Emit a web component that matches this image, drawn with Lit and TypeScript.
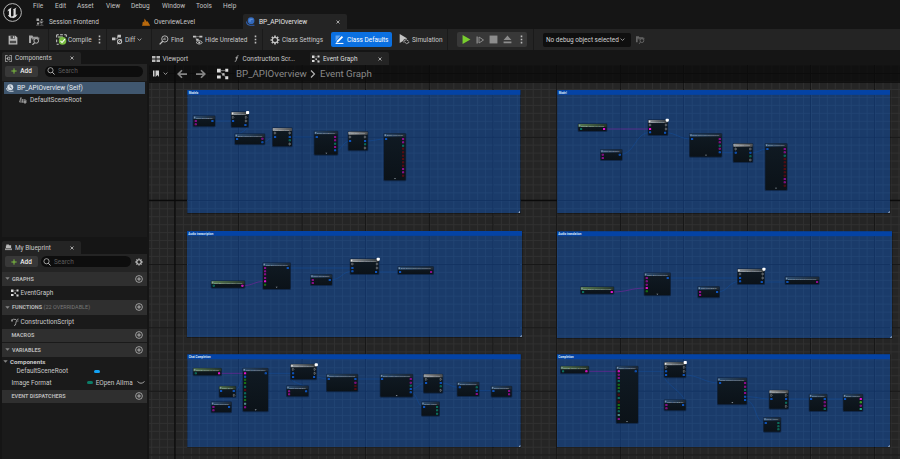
import { LitElement, html, svg, css } from "lit";
import { customElement } from "lit/decorators.js";

type Pin = [number, number, string];
type Node = { b: [number, number, number, number]; k: string; t: string; p: Pin[]; badge?: [number, number]; more?: [number, number] };
type Group = { o: [number, number]; b: [number, number, number, number]; t: string; tw: number; nodes: Node[]; wires: [string, string][] };

const col = (x: number, ys: number[], kinds: string): Pin[] => ys.map((y, i) => [x, y, kinds[i]] as Pin);
const n = (x: number, y: number, w: number, h: number, k: string, t: string, p: Pin[], badge?: [number, number], more?: [number, number]): Node => ({ b: [x, y, w, h], k, t, p, badge, more });

/* Coordinates inside a group are in thirds of a pixel. */
const groups: Group[] = [
  {
    o: [150, 80], b: [112, 30, 999, 369], t: "Models", tw: 29,
    nodes: [
      n(129, 107, 67, 33, "blue", "Make OpenAIAuth", [...col(137, [123, 133], "mm"), [187, 123, "b"]]),
      n(243, 95, 53, 47, "async", "Get Models", [...col(249, [112, 123], "wb"), ...col(288, [112, 123], "ww"), [286, 135, "b"]], [293, 97]),
      n(254, 161, 91, 33, "blue", "Break ListModelsResponse", [[261, 177, "b"], ...col(337, [176, 187], "mb")]),
      n(367, 143, 60, 57, "gray", "For Each Loop", [...col(375, [159, 171], "wb"), ...col(419, [159, 171, 181, 192], "wbgw")]),
      n(492, 153, 72, 72, "blue", "Break OpenAIModel", [[500, 171, "b"], ...col(555, [171, 181, 191, 201, 211], "mmgmb")], undefined, [529, 220]),
      n(594, 154, 60, 58, "gray", "For Each Loop", [...col(600, [171, 183], "wb"), ...col(645, [171, 183, 193, 204], "wbgw")]),
      n(701, 160, 67, 142, "blue", "Break Permission", [[708, 177, "b"], ...col(759, [177, 187, 197, 206, 217, 227, 237, 247, 257, 267, 277, 287], "mmgrrrrrrmmr")], undefined, [735, 296]),
    ],
    wires: [["M187 123H249", "b"], ["M286 135C310 150 240 165 261 177", "b"], ["M337 187C355 187 355 171 375 171", "b"], ["M418 171H500", "b"], ["M555 211C578 211 578 183 600 183", "b"], ["M645 183C675 183 680 177 708 177", "b"]],
  },
  {
    o: [560, 80], b: [-8, 30, 998, 369], t: "Model", tw: 24,
    nodes: [
      n(54, 131, 87, 23, "green", "OpenAI Model To String", [[63, 147, "g"], [132, 147, "M"]]),
      n(121, 208, 66, 33, "blue", "Make OpenAIAuth", [...col(128, [224, 234], "mm"), [179, 224, "b"]]),
      n(264, 119, 60, 47, "async", "Retrieve Model", [...col(270, [135, 147, 157], "wMb"), ...col(318, [135, 147], "ww"), [315, 158, "b"]], [322, 120]),
      n(388, 160, 98, 71, "blue", "Break RetrieveModelResponse", [[396, 177, "b"], ...col(479, [177, 187, 197, 206, 217], "mmgmb")], undefined, [438, 226]),
      n(519, 190, 60, 57, "gray", "For Each Loop", [...col(527, [207, 218], "wb"), ...col(571, [207, 218, 229, 240], "wbgw")]),
      n(615, 190, 67, 141, "blue", "Break Permission", [[622, 207, "b"], ...col(674, [207, 217, 227, 237, 247, 257, 267, 277, 287, 297, 307, 317], "mmgrrrrrrmmr")], undefined, [648, 325]),
    ],
    wires: [["M132 147H270", "m"], ["M179 224C225 224 225 157 270 157", "b"], ["M315 158C350 158 355 177 396 177", "b"], ["M479 217H527", "b"], ["M571 218C600 218 600 207 622 207", "b"]],
  },
  {
    o: [150, 222], b: [111, 27, 1005, 318], t: "Audio transcription", tw: 75,
    nodes: [
      n(183, 176, 102, 22, "green", "Open AIAudio Transcription Format", [[191, 191, "g"], [277, 191, "M"]]),
      n(338, 122, 84, 80, "blue", "Make AudioTranscription", [...col(345, [138, 148, 157, 168, 178, 188], "mmmmMe"), [413, 138, "b"]], undefined, [380, 196]),
      n(481, 157, 66, 33, "blue", "Make OpenAIAuth", [...col(488, [174, 183], "mm"), [539, 174, "b"]]),
      n(600, 110, 87, 47, "async", "Create Audio Transcription", [...col(607, [126, 138, 148], "wbb"), ...col(681, [126, 138], "ww"), [678, 150, "b"]], [685, 111]),
      n(743, 133, 108, 24, "blue", "Break AudioTranscriptionResponse", [[750, 150, "b"], [843, 150, "m"]]),
    ],
    wires: [["M277 191C310 191 312 178 345 178", "m"], ["M413 138H607", "b"], ["M539 174C575 174 575 148 607 148", "b"], ["M678 150H750", "b"]],
  },
  {
    o: [550, 222], b: [21, 28, 1005, 320], t: "Audio translation", tw: 69,
    nodes: [
      n(91, 194, 101, 22, "green", "Open AIAudio Transcription Format", [[99, 210, "g"], [185, 210, "M"]]),
      n(282, 152, 80, 69, "blue", "Make AudioTranslation", [...col(290, [168, 178, 188, 198, 208], "mmmMe"), [353, 168, "b"]], undefined, [322, 217]),
      n(443, 193, 66, 34, "blue", "Make OpenAIAuth", [...col(450, [210, 219], "mm"), [501, 210, "b"]]),
      n(562, 140, 82, 47, "async", "Create Audio Translation", [...col(570, [156, 168, 178], "wbb"), ...col(638, [156, 168], "ww"), [635, 180, "b"]], [642, 141]),
      n(705, 164, 103, 23, "blue", "Break AudioTranslationResponse", [[712, 180, "b"], [801, 180, "m"]]),
    ],
    wires: [["M185 210C235 210 240 198 290 198", "m"], ["M353 168H570", "b"], ["M501 210C535 210 535 178 570 178", "b"], ["M635 180H712", "b"]],
  },
  {
    o: [150, 345], b: [112, 28, 1000, 278], t: "Chat Completion", tw: 66,
    nodes: [
      n(129, 69, 86, 23, "green", "OpenAI Model To String", [[137, 85, "g"], [207, 85, "M"]]),
      n(207, 123, 51, 34, "green", "Make Array", [[213, 138, "b"], [251, 138, "b"], [252, 151, "w"]]),
      n(183, 170, 62, 33, "blue", "Make Message", [...col(190, [186, 196], "mm"), [237, 186, "b"]]),
      n(278, 69, 77, 131, "blue", "Make ChatCompletion", [...col(285, [85, 95, 104, 114, 125, 135, 145, 155, 165, 176, 187], "Mbeegrggecm"), [347, 85, "b"]], undefined, [317, 195]),
      n(409, 122, 67, 33, "blue", "Make OpenAIAuth", [...col(417, [139, 148], "mm"), [468, 139, "b"]]),
      n(421, 57, 79, 47, "async", "Create Chat Completion", [...col(429, [73, 85, 96], "wbb"), ...col(494, [73, 85], "ww"), [492, 96, "b"]], [499, 59]),
      n(529, 87, 95, 53, "blue", "Break ChatCompletionRequest", [[536, 102, "b"], ...col(616, [102, 113, 123, 132], "bmrr")]),
      n(690, 87, 99, 69, "blue", "Break ChatCompletionResponse", [[696, 102, "b"], ...col(782, [102, 113, 122, 132, 142], "mmgbb")], undefined, [740, 152]),
      n(820, 87, 59, 57, "gray", "For Each Loop", [...col(828, [103, 114], "wb"), ...col(872, [103, 114, 124, 136], "wbgw")]),
      n(814, 170, 55, 43, "blue", "Break Usage", [[822, 186, "b"], ...col(861, [186, 196, 206], "ggg")]),
      n(921, 111, 67, 43, "blue", "Break ChatChoice", [[929, 127, "b"], ...col(980, [127, 137, 147], "gbm")]),
      n(1023, 123, 63, 33, "blue", "Break Message", [[1030, 138, "b"], ...col(1077, [138, 148], "mm")]),
    ],
    wires: [["M207 85H285", "m"], ["M251 138C275 138 265 95 285 95", "b"], ["M347 85H429", "b"], ["M468 139C500 125 400 110 429 96", "b"], ["M492 96C515 96 515 102 536 102", "b"], ["M616 102H696", "b"], ["M782 132C805 132 805 114 828 114", "b"], ["M782 142C805 145 800 186 822 186", "b"], ["M872 114C900 114 900 127 929 127", "b"], ["M980 137H1030", "b"]],
  },
  {
    o: [550, 345], b: [21, 28, 999, 278], t: "Completion", tw: 46,
    nodes: [
      n(31, 63, 86, 23, "green", "OpenAI Model To String", [[39, 79, "g"], [109, 79, "M"]]),
      n(198, 63, 67, 172, "blue", "Make Completion", [...col(206, [79, 89, 99, 108, 119, 129, 139, 149, 159, 170, 180, 189, 199, 210, 222], "Mmmgeegrgreegcm"), [257, 79, "b"]], undefined, [231, 230]),
      n(342, 51, 66, 47, "async", "Create Completion", [...col(348, [67, 79, 90], "wbb"), ...col(402, [67, 79], "ww"), [401, 90, "b"]], [406, 52]),
      n(342, 164, 66, 33, "blue", "Make OpenAIAuth", [...col(349, [180, 190], "mm"), [399, 180, "b"]]),
      n(502, 98, 89, 81, "blue", "Break CompletionResponse", [[510, 114, "b"], ...col(585, [114, 125, 135, 144, 155, 165], "mmgmbb")], undefined, [547, 173]),
      n(640, 217, 53, 44, "blue", "Break Usage", [[647, 234, "b"], ...col(685, [234, 244, 253], "ggg")]),
      n(657, 135, 59, 57, "gray", "For Each Loop", [...col(664, [151, 162], "wb"), ...col(708, [151, 162, 173, 184], "wbgw")]),
      n(777, 147, 55, 52, "blue", "Break Choice", [[783, 162, "b"], ...col(824, [162, 172, 182, 192], "bmmg")]),
      n(879, 147, 60, 52, "blue", "Break Logprobs", [[885, 162, "b"], ...col(932, [162, 172, 182, 192], "MEmC")]),
    ],
    wires: [["M109 79H206", "m"], ["M257 79H348", "b"], ["M399 180C425 150 325 110 348 90", "b"], ["M401 90C450 90 460 114 510 114", "b"], ["M585 155C620 155 630 162 664 162", "b"], ["M585 165C625 170 610 234 647 234", "b"], ["M708 162H783", "b"], ["M824 162H885", "b"]],
  },
];

const pinColor: Record<string, string> = { m: "#a30da0", M: "#f516dd", b: "#0f60dc", g: "#0c7f69", r: "#640b12", w: "#a4a9ad", e: "#1c8413", E: "#49cf28", c: "#5ba1a0", C: "#29c993" };

const icon = (w: number, body: unknown, cls = "") => html`<svg class="icon ${cls}" width=${w} height=${w} viewBox="0 0 16 16">${body}</svg>`;
const I = {
  save: svg`<path d="M1 1h11l3 3v11H1z" fill="#b9b9b9"/><path d="M4 1h7v5H4zM3 9h10v4H3z" fill="#4b4b4b"/><path d="M8 2h2v3H8z" fill="#c8c8c8"/>`,
  folder: svg`<path d="M0 2h5l1 2h7v2H3v7H0z" fill="#a5a5a5"/><path d="M4 5h11v3H4z" fill="#8a8a8a"/><circle cx="10.5" cy="10" r="3.4" fill="#242424" stroke="#bbb" stroke-width="1.4"/><path d="M8 13l-3 2.6" stroke="#bbb" stroke-width="1.7"/>`,
  compile: svg`<path d="M1 1h3M6 1h4M12 1h3M1 1v4M1 8v4M15 1v3M1 15h3" stroke="#c8c8c8" stroke-width="1.6"/><path d="M3 3h7v3H3z" fill="#7c8b72"/><circle cx="9.5" cy="10" r="5.5" fill="#79bd42"/><path d="M6.5 10l2.3 2.4L13 7.6" stroke="#fff" stroke-width="1.6" fill="none"/>`,
  diff: svg`<path d="M0 5h5v4H0zM8 1h5v4H8z" fill="#c4c4c4"/><path d="M5 7h3V3" stroke="#aaa" fill="none"/><circle cx="11" cy="11" r="3" fill="none" stroke="#bbb" stroke-width="1.6"/><path d="M8 15l6-8" stroke="#ddd"/>`,
  find: svg`<circle cx="9.3" cy="6.3" r="5" fill="none" stroke="#c4c4c4" stroke-width="1.4"/><path d="M1 15l5-5" stroke="#c4c4c4" stroke-width="2"/><path d="M6 7h2V5h3M8 7h3" stroke="#bbb" fill="none"/>`,
  hide: svg`<path d="M0 1h5v3H0zM10 1h5v3h-5zM5 6h4v3H5z" fill="#c4c4c4"/><path d="M4 2.5h7M5 4v3" stroke="#999"/><path d="M5 12q5-6 10 0q-5 5-10 0z" fill="none" stroke="#c4c4c4" stroke-width="1.4"/><circle cx="10" cy="12" r="1.6" fill="#ccc"/>`,
  gear: svg`<path d="M8 .8v14.4M.8 8h14.4M2.9 2.9l10.2 10.2M13.1 2.9L2.9 13.1" stroke="#c4c4c4" stroke-width="2.6"/><circle cx="8" cy="8" r="5" fill="#c4c4c4"/><circle cx="8" cy="8" r="3.3" fill="#242424"/>`,
  defaults: svg`<path d="M1 1h9L1 11z" fill="#cfe4ff" opacity=".45"/><path d="M2 14l1.5-4L12 1.6 14.5 4 6 12.3z" fill="#fff"/><path d="M1 15h14" stroke="#fff" stroke-width="1.8"/>`,
  sim: svg`<path d="M1 0l11 6.5L1 13z" fill="#c4c4c4"/><circle cx="10.5" cy="11.5" r="4.5" fill="#242424"/><path d="M6 11.5h2l3 2.5 4-2M7 9.5q4-3 7 1" stroke="#aaa" stroke-width="1.4" fill="none"/>`,
  play: svg`<path d="M1 0l14 8L1 16z" fill="#78cd2e"/>`,
  step: svg`<path d="M1 1h2.6v14H1z" fill="#8c8c8c"/><path d="M6 2l9 6-9 6z" fill="none" stroke="#8c8c8c" stroke-width="2"/>`,
  stop: svg`<path d="M1 1h14v14H1z" fill="#8c8c8c"/>`,
  eject: svg`<path d="M8 1l7 8H1zM1 11.5h14v3H1z" fill="#8c8c8c"/>`,
  dots: svg`<path d="M6.6 1h2.8v2.8H6.6zM6.6 6.6h2.8v2.8H6.6zM6.6 12.2h2.8V15H6.6z" fill="#bdbdbd"/>`,
  chev: svg`<path d="M2 5l6 6 6-6" stroke="#c4c4c4" stroke-width="2.4" fill="none"/>`,
  session: svg`<path d="M1 1h5v5H1zM2 9h4v4H2zM10 2h3v3h-3zM9 8h4v2H9z" fill="#a9a9a9"/><path d="M0 14.5h7M8 7h7M8 14.5h7M11.5 9v5M8 3v9" stroke="#999"/>`,
  level: svg`<path d="M1 9l3-2v4l1-10 5 7 1-2 4 7v2H1z" fill="#b8690d"/><path d="M0 14.5h16" stroke="#b8690d" stroke-width="1.6"/>`,
  bpBlue: svg`<circle cx="9" cy="6.5" r="6" fill="#3268bb"/><path d="M6 4h6M5 7h4" stroke="#6da0e8" stroke-width="1.6"/><path d="M1 8q0 6 6 6.500h8" stroke="#2f62b5" stroke-width="1.8" fill="none"/>`,
  bp: svg`<circle cx="8.5" cy="6.5" r="6" fill="#d6dde4"/><path d="M8 2.5v4l4 2" stroke="#52687d" stroke-width="1.6" fill="none"/><path d="M1 8q0 6 6 6.5h8" stroke="#d6dde4" stroke-width="1.8" fill="none"/>`,
  scene: svg`<path d="M4 11V3l-3 9h8M7 13V6M10 6v8h4V8h-4" stroke="#a9a9a9" stroke-width="1.5" fill="none"/><circle cx="12" cy="12" r="2.3" fill="#999"/>`,
  comp: svg`<path d="M6 1H1v14h5M10 1h5v14h-5" stroke="#c4c4c4" stroke-width="1.6" fill="none"/><path d="M6 5h5v6H6z" fill="none" stroke="#c4c4c4" stroke-width="1.6"/><path d="M3 8h4" stroke="#c4c4c4" stroke-width="1.6"/>`,
  mybp: svg`<path d="M3 1h6v2h5v6H2V4h1z" fill="#b8b8b8"/><path d="M0 10h16v4H0z" fill="#969696"/>`,
  viewport: svg`<path d="M0 2h7v5H0zM9 2h7v5H9zM0 9h7v5H0zM9 9h7v5H9z" fill="#b8b8b8"/>`,
  fn: svg`<path d="M4 14.5q2.500 1 3.300-2.500L9 4q.6-3 3.600-2.300M5.500 6.500h6" stroke="#c4c4c4" stroke-width="1.8" fill="none"/>`,
  graph: svg`<path d="M0 1h5v5H0zM0 10h5v4H0zM11 1h4v4h-4zM7 7h3v3H7zM11 11h4v4h-4z" fill="#dcdcdc"/><path d="M5 3.500h6M5 6l3 2.500 4 4" stroke="#999"/>`,
  script: svg`<path d="M6 15q4 0 3.500-4L11 5q1-3 4-3M1 5q3-4 9-2" stroke="#aaa" stroke-width="1.7" fill="none"/><path d="M0 3h4v4H0zM11 5h4v2h-4z" fill="#888"/>`,
  search: svg`<circle cx="7" cy="6.500" r="5.200" fill="none" stroke="#c4c4c4" stroke-width="1.500"/><path d="M10.600 10.400L15 15" stroke="#c4c4c4" stroke-width="2"/>`,
  plus: svg`<path d="M8 1v14M1 8h14" stroke="#7fc241" stroke-width="2.600"/>`,
  close: svg`<path d="M2 2l12 12M14 2L2 14" stroke="#cfcfcf" stroke-width="3"/>`,
  circ: svg`<circle cx="8" cy="8" r="6.800" fill="none" stroke="#c0c0c0" stroke-width="1.500"/><path d="M8 4.300v7.400M4.300 8h7.400" stroke="#c0c0c0" stroke-width="1.700"/>`,
  tri: svg`<path d="M1 4h14l-7 8z" fill="#858585"/>`,
  left: svg`<path d="M16 8H3M8 2L2 8l6 6" stroke="#858585" stroke-width="2.800" fill="none"/>`,
  right: svg`<path d="M0 8h13M8 2l6 6-6 6" stroke="#858585" stroke-width="2.800" fill="none"/>`,
  book: svg`<path d="M2 1h3v12H2z" fill="#d0d0d0"/><path d="M7 1h7v13l-3-4-4 4z" fill="#d0d0d0"/>`,
  crumb: svg`<path d="M4 1l7 7-7 7" stroke="#b4b4b4" stroke-width="2.300" fill="none"/>`,
  eye: svg`<path d="M1 5q7 7 14 0" stroke="#b0b0b0" stroke-width="1.800" fill="none"/>`,
};

@customElement("app-menu")
class AppMenu extends LitElement {
  static styles = css`
    :host { display: grid; grid-template-columns: 22px 22px 29px 25px 31px 34px 27px 40px; padding-left: 33px; height: 12px; font-size: 6.5px; line-height: 12px; color: #c4c4c4; }
  `;
  render() {
    return ["File", "Edit", "Asset", "View", "Debug", "Window", "Tools", "Help"].map((m) => html`<span>${m}</span>`);
  }
}

@customElement("event-graph")
class EventGraph extends LitElement {
  static styles = css`
    :host { display: block; height: 394px; }
    svg { display: block; }
    text { font-family: Roboto, sans-serif; }
  `;
  node(d: Node) {
    const [x, y, w, h] = d.b;
    return svg`
      <rect x=${x - 1} y=${y - 1} width=${w + 2} height=${h + 3} rx="4" fill="#0a1a33" opacity=".6"/>
      <rect x=${x + 1} y=${y + 1} width=${w - 2} height=${h - 2} rx="3" fill="url(#body)"/>
      <rect x=${x + 1} y=${y + 1} width=${w - 2} height="9" rx="2" fill=${`url(#h-${d.k})`}/>
      <rect x=${x + 3} y=${y + 3} width="4" height="5" fill=${d.k === "async" ? "#fff" : "#8ea3b8"} opacity=".8"/>
      <text x=${x + 9} y=${y + 8.5} font-size="7.5" fill="#c7d2dd" opacity=".75" textLength=${w - 18} lengthAdjust="spacingAndGlyphs">${d.t}</text>
      ${d.p.map(([px, py, c]) => c === "w"
        ? svg`<path d=${`M${px - 2} ${py - 3}h3l2 3-2 3h-3z`} fill="#20272c" stroke="#a4a9ad" stroke-width="1.3"/>`
        : svg`<rect x=${px - 3} y=${py - 3} width="6.500" height="6" rx="1" fill=${pinColor[c]} opacity=${c === "M" ? 1 : 0.9}/><rect x=${px - 1} y=${py - 1} width="2" height="2" fill="#0b1420" opacity=".4"/>`)}
      ${d.more ? svg`<path d=${`M${d.more[0] - 3} ${d.more[1] - 2}h6l-3 4z`} fill="#8a949c"/>` : ""}
      ${d.badge ? svg`<rect x=${d.badge[0] - 5} y=${d.badge[1] - 4} width="9.500" height="9" rx="2.5" fill="#fff"/>` : ""}`;
  }
  group(g: Group) {
    const [x, y, w, h] = g.b;
    const r = x + w, b = y + h;
    return svg`<g transform=${`translate(${g.o[0]} ${g.o[1]}) scale(${1 / 3})`}>
      <rect x=${x - 1} y=${y} width=${w + 3} height=${h + 3} rx="2" fill="#000" opacity=".3"/>
      <rect x=${x} y=${y} width=${w} height=${h} fill="#1a3b6a"/>
    </g>
    <rect x=${g.o[0] + x / 3} y=${g.o[1] + y / 3} width=${w / 3} height=${h / 3} fill="url(#minorC)"/>
    <g transform=${`translate(${g.o[0]} ${g.o[1]}) scale(${1 / 3})`}>
      <rect x=${x} y=${y} width=${w} height="14.500" fill="#0443a5"/>
      <text x=${x + 4} y=${y + 12} font-size="8" font-weight="700" fill="#dfe9f7" textLength=${g.tw} lengthAdjust="spacingAndGlyphs">${g.t}</text>
      <path d=${`M${r - 1} ${b - 6}v5h-5z`} fill="#c9d4e2"/>
    </g>`;
  }
  wiresAndNodes(g: Group) {
    return svg`<g transform=${`translate(${g.o[0]} ${g.o[1]}) scale(${1 / 3})`}>
      ${g.wires.map(([d, c]) => svg`<path d=${d} fill="none" stroke=${c === "m" ? "#7d1fa0" : "#124c9a"} stroke-width="2.2" opacity=${c === "m" ? 0.8 : 0.7}/>`)}
      ${g.nodes.map((k) => this.node(k))}
    </g>`;
  }
  render() {
    const head = (id: string, a: string, b: string) => svg`<linearGradient id=${id}><stop offset="0" stop-color=${a}/><stop offset="1" stop-color=${b}/></linearGradient>`;
    const vx = [238.5, 302.2, 365.5, 429.4, 493, 556.6, 620.5, 683.5, 747.5, 810.5, 874.5];
    const hy = [73.5, 137.3, 264.5, 327.8, 391.3, 455];
    return html`<svg width="751" height="394" viewBox="149 65 751 394">
      <defs>
        <pattern id="minor" x="175" y="200.3" width="7.95" height="7.95" patternUnits="userSpaceOnUse"><path d="M0 .5H7.95M.5 0V7.95" stroke="#313131" stroke-width=".9"/></pattern>
        <pattern id="minorC" x="175" y="200.3" width="7.95" height="7.95" patternUnits="userSpaceOnUse"><path d="M0 .5H7.95M.5 0V7.95" stroke="#224474" stroke-width=".8"/></pattern>
        <linearGradient id="body" x2="0" y2="1"><stop offset="0" stop-color="#101a23"/><stop offset="1" stop-color="#0b1218"/></linearGradient>
        ${head("h-blue", "#2c4c70", "#1c2835")}${head("h-async", "#8f9396", "#30383e")}${head("h-gray", "#9b9b9b", "#4c4f52")}${head("h-green", "#587a50", "#25352b")}
      </defs>
      <rect x="149" y="65" width="751" height="394" fill="#252525"/>
      <rect x="149" y="65" width="751" height="394" fill="url(#minor)"/>
      ${vx.map((x) => svg`<path d=${`M${x} 65V459`} stroke="#171717" stroke-width="1"/>`)}
      ${hy.map((y) => svg`<path d=${`M149 ${y}H900`} stroke="#171717" stroke-width="1"/>`)}
      <path d="M175 65V459M149 200.5H900" stroke="#0a0a0a" stroke-width="1.4"/>
      ${groups.map((g) => this.group(g))}
      ${vx.map((x) => svg`<path d=${`M${x} 95V212M${x} 236V337M${x} 359V447`} stroke="#102f5e" stroke-width="1" opacity=${(x > 521 && x < 557) || x > 890 ? 0 : 0.7}/>`)}
      ${[137.3, 200.5, 264.5, 327.8, 391.3].map((y) => svg`<path d=${`M188 ${y}H520M558 ${y}H890`} stroke="#102f5e" stroke-width="1" opacity=".75"/>`)}
      ${groups.map((g) => this.wiresAndNodes(g))}
    </svg>`;
  }
}

@customElement("app-root")
class AppRoot extends LitElement {
  static styles = css`
    :host { display: flex; flex-direction: column; width: 900px; height: 459px; overflow: hidden; background: #151515; color: #c8c8c8; font: 6.45px/10px Roboto, sans-serif; }
    * { box-sizing: border-box; }
    .icon { display: block; flex: none; }
    span { white-space: nowrap; }
    .top { display: flex; height: 29px; }
    .logo { flex: none; width: 28px; padding: 3px 0 0 3px; }
    .rows { flex: 1; margin-left: -28px; }
    .tabs { display: grid; grid-template-columns: 35px 106px 102px 104px; height: 17px; padding-top: 2px; }
    .tab { display: flex; align-items: center; gap: 5px; padding-left: 1px; }
    .tab.lvl { gap: 4px; padding-left: 1px; }
    .tab.on { background: #242424; border-radius: 2px 2px 0 0; color: #e6e6e6; gap: 4px; padding: 0 7px 0 3px; font-size: 6.6px; }
    .tab .icon:last-child { margin-left: -4px; }
    .tab .icon:first-child { margin-left: 0; }
    .grow { flex: 1; }
    .bar { display: grid; align-items: center; height: 21px; background: #242424; flex: none;
      grid-template-columns: 8px 21px 19px 8px 12px 27px 11px 6px 13px 12px 14px 8px 12px 22px 12px 46px 11px 8px 12px 49px 68px 13px 35px 10px 76px 10px 92px 12px; font-size: 6.45px; }
    .sep { width: 1px; height: 21px; background: #1a1a1a; }
    .btn { display: flex; align-items: center; gap: 3px; width: 61px; height: 15px; padding-left: 4px; border-radius: 2px; background: #0b70e1; color: #fff; }
    .plays { display: flex; align-items: center; justify-content: space-between; width: 70px; height: 15px; background: #383838; border-radius: 2px; padding: 0 1px 0 5px; }
    .drop { display: flex; align-items: center; justify-content: space-between; width: 88px; height: 14px; background: #0f0f0f; border-radius: 2px; padding: 0 6px 0 3px; color: #d2d2d2; }
    .dim { opacity: .5; margin-left: 1px; }
    .main { display: grid; grid-template-columns: 149px 751px; height: 409px; }
    .left { display: flex; flex-direction: column; padding: 2px 2px 0 2px; }
    .ptab { display: flex; align-items: center; width: 79px; height: 12px; padding: 0 7px 0 3px; gap: 3px; background: #242424; border-radius: 2px 2px 0 0; flex: none; }
    .ptab.my { height: 13px; }
    .tools { display: flex; align-items: center; height: 17px; padding: 0 3px 3px; background: #242424; flex: none; }
    .tools.my { height: 18px; }
    .add { display: flex; align-items: center; justify-content: center; gap: 3px; width: 33px; height: 11px; background: #383838; border-radius: 2px; color: #eee; font-weight: 500; }
    .search { display: flex; align-items: center; gap: 3.5px; width: 98px; height: 11px; margin-left: 7px; padding-left: 1.5px; border-radius: 6px; background: #0d0d0d; color: #5b5b5b; }
    .search.my { width: 90px; margin: 0 4px 0 3px; }
    .tree { height: 156px; background: #1a1a1a; padding: 1px 2px 0; flex: none; }
    .row { display: flex; align-items: center; height: 12px; gap: 3px; }
    .row.sel { background: #40576f; color: #e4ebf1; gap: 3px; padding-left: 2px; font-size: 6.6px; }
    .row.child { padding-left: 15px; }
    .split { height: 4px; flex: none; }
    .split.thin { height: 1px; }
    .bp { flex: 1; background: #1a1a1a; }
    .sec { display: flex; align-items: center; height: 13.5px; padding: 0 4.5px 0 3px; gap: 2px; background: #2f2f2f; font-weight: 700; font-size: 5.5px; color: #b7b7b7; }
    .sec.tall { height: 15px; }
    .sec.no { padding-left: 9.5px; }
    .sec em { font-style: normal; font-weight: 400; color: #767676; margin-left: 0; }
    .item { display: flex; align-items: center; height: 14px; padding-left: 9px; gap: 1.5px; }
    .vars { display: grid; grid-template-rows: 10px 9px 14px; height: 33px; }
    .var { display: flex; align-items: center; }
    .v2 { padding-left: 14.5px; }
    .v3 { padding-left: 9.5px; }
    .v1 { gap: 2px; padding-left: 1px; font-weight: 700; font-size: 6.2px; }
    .pill { width: 6px; height: 3px; border-radius: 1.5px; background: #13a2f5; }
    .v2 .pill { margin-left: 25.5px; }
    .v3 .pill { background: #0c7d68; margin: 0 3px 0 35px; }
    .v3 .icon { margin-left: 4px; }
    .right { display: grid; grid-template-rows: 15px 394px; min-width: 0; }
    .gtabs { display: grid; grid-template-columns: 81px 79px 79px; padding: 2px 0 0 1px; }
    .gt { display: flex; align-items: center; gap: 3px; padding-left: 1.5px; }
    .gt.on { background: #242424; color: #ddd; padding: 0 7px 0 2px; border-radius: 2px 2px 0 0; }
    .canvas { position: relative; overflow: hidden; }
    .crumbs { position: absolute; inset: 0 0 auto 0; height: 17.5px; display: grid; align-items: center; grid-template-columns: 3px 11px 14px 19px 21px 19px 72.5px 11.5px 80px; background: rgba(8, 8, 8, .72); color: #8a8a8a; font-size: 9.7px; }
  `;
  render() {
    return html`
      <div class="top">
        <svg class="logo" width="28" height="25" viewBox="0 0 25 22">
          <circle cx="9.5" cy="9.5" r="8.9" fill="#121212" stroke="#c9c9c9" stroke-width=".9"/>
          <path d="M3.800 9.200Q5 6 8.600 4.600L8 6v6.600q0 1.300 1.200.8.700-.3 1.300-.9V6.700L10 6.300q1.800-.5 3.600-1.800l-.9 1.600v6l1.900-.8Q13.500 14.200 10 15.200l-1-.8-1 .7Q5.700 14 4.900 12l1 .1V8.400q0-.8-.6-.6-.7.300-1.500 1.400z" fill="#dcdcdc"/>
        </svg>
        <div class="rows">
          <app-menu></app-menu>
          <div class="tabs">
            <span></span>
            <div class="tab">${icon(8, I.session)}<span>Session Frontend</span></div>
            <div class="tab lvl">${icon(8, I.level)}<span>OverviewLevel</span></div>
            <div class="tab on">${icon(9, I.bpBlue)}<span>BP_APIOverview</span><span class="grow"></span>${icon(4, I.close)}</div>
          </div>
        </div>
      </div>
      <div class="bar">
        <i></i>${icon(10, I.save)}${icon(11, I.folder)}<i class="sep"></i>
        ${icon(11, I.compile)}<span>Compile</span>${icon(9, I.dots)}<i class="sep"></i>
        ${icon(11, I.diff)}<span>Diff</span>${icon(5, I.chev)}<i class="sep"></i>
        ${icon(10, I.find)}<span>Find</span>${icon(10, I.hide)}<span>Hide Unrelated</span>${icon(9, I.dots)}<i class="sep"></i>
        ${icon(10, I.gear)}<span>Class Settings</span>
        <div class="btn">${icon(9, I.defaults)}<span>Class Defaults</span></div>
        ${icon(11, I.sim)}<span>Simulation</span><i class="sep"></i>
        <div class="plays">${icon(9, I.play)}${icon(8, I.step)}${icon(9, I.stop)}${icon(9, I.eject)}${icon(9, I.dots)}</div>
        <i class="sep"></i>
        <div class="drop"><span>No debug object selected</span>${icon(5, I.chev)}</div>
        ${icon(9, I.folder, "dim")}
      </div>
      <div class="main">
        <div class="left">
          <div class="ptab">${icon(7, I.comp)}<span>Components</span><span class="grow"></span>${icon(4, I.close)}</div>
          <div class="tools"><div class="add">${icon(6, I.plus)}<span>Add</span></div><div class="search">${icon(8, I.search)}<span>Search</span></div></div>
          <div class="tree">
            <div class="row sel">${icon(8, I.bp)}<span>BP_APIOverview (Self)</span></div>
            <div class="row child">${icon(8, I.scene)}<span>DefaultSceneRoot</span></div>
          </div>
          <div class="split"></div>
          <div class="ptab my">${icon(7, I.mybp)}<span>My Blueprint</span><span class="grow"></span>${icon(4, I.close)}</div>
          <div class="tools my"><div class="add">${icon(6, I.plus)}<span>Add</span></div><div class="search my">${icon(8, I.search)}<span>Search</span></div>${icon(8, I.gear)}</div>
          <div class="bp">
            <div class="sec">${icon(5, I.tri)}<span>GRAPHS</span><span class="grow"></span>${icon(8, I.circ)}</div>
            <div class="item">${icon(8, I.graph)}<span>EventGraph</span></div>
            <div class="sec tall">${icon(5, I.tri)}<span>FUNCTIONS <em>(22 OVERRIDABLE)</em></span><span class="grow"></span>${icon(8, I.circ)}</div>
            <div class="item">${icon(8, I.script)}<span>ConstructionScript</span></div>
            <div class="sec no"><span>MACROS</span><span class="grow"></span>${icon(8, I.circ)}</div>
            <div class="split thin"></div>
            <div class="sec">${icon(5, I.tri)}<span>VARIABLES</span><span class="grow"></span>${icon(8, I.circ)}</div>
            <div class="vars">
              <div class="var v1">${icon(5, I.tri)}<span>Components</span></div>
              <div class="var v2"><span>DefaultSceneRoot</span><i class="pill"></i></div>
              <div class="var v3"><span>Image Format</span><i class="pill"></i><span>EOpen AIIma</span>${icon(8, I.eye)}</div>
            </div>
            <div class="sec no"><span>EVENT DISPATCHERS</span><span class="grow"></span>${icon(8, I.circ)}</div>
          </div>
        </div>
        <div class="right">
          <div class="gtabs">
            <div class="gt">${icon(8, I.viewport)}<span>Viewport</span></div>
            <div class="gt">${icon(7, I.fn)}<span>Construction Scr...</span></div>
            <div class="gt on">${icon(8, I.graph)}<span>Event Graph</span><span class="grow"></span>${icon(4, I.close)}</div>
          </div>
          <div class="canvas">
            <event-graph></event-graph>
            <div class="crumbs"><i></i>${icon(8, I.book)}${icon(5, I.chev)}${icon(10, I.left)}${icon(10, I.right)}${icon(12, I.graph)}<span>BP_APIOverview</span>${icon(8, I.crumb)}<span>Event Graph</span></div>
          </div>
        </div>
      </div>`;
  }
}
